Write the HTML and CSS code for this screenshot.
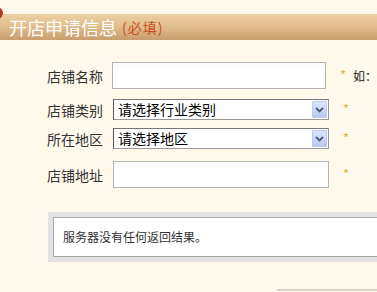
FILE: index.html
```html
<!DOCTYPE html>
<html lang="zh-CN">
<head>
<meta charset="utf-8">
<title>开店申请信息</title>
<link rel="stylesheet" href="styles.css">
</head>
<body>
<div class="page">
  <div class="header">
    <span class="dot"></span>
    <span class="title">开店申请信息</span>
    <span class="required">(必填)</span>
  </div>
  <div class="form">
    <div class="row row-text first">
      <span class="label">店铺名称</span>
      <span class="input"></span>
      <span class="star">*</span>
      <span class="hint">如：</span>
    </div>
    <div class="row row-select gap10">
      <span class="label">店铺类别</span>
      <span class="select"><span class="sel-text">请选择行业类别</span><span class="arrow"><svg width="9" height="6" viewBox="0 0 9 6"><path d="M1 1 L4.5 4.5 L8 1" fill="none" stroke="#4a5c80" stroke-width="1.8"/></svg></span></span>
      <span class="star">*</span>
    </div>
    <div class="row row-select gap8">
      <span class="label">所在地区</span>
      <span class="select"><span class="sel-text">请选择地区</span><span class="arrow"><svg width="9" height="6" viewBox="0 0 9 6"><path d="M1 1 L4.5 4.5 L8 1" fill="none" stroke="#4a5c80" stroke-width="1.8"/></svg></span></span>
      <span class="star">*</span>
    </div>
    <div class="row row-text gap12">
      <span class="label">店铺地址</span>
      <span class="input"></span>
      <span class="star">*</span>
    </div>
  </div>
  <div class="message">
    <div class="message-inner">服务器没有任何返回结果。</div>
  </div>
  <div class="bottom-line"></div>
</div>
</body>
</html>
```
FILE: styles.css
```css
html, body {
  margin: 0;
  padding: 0;
}
body {
  background: #fef9eb;
  font-family: "Noto Sans CJK SC", "Noto Sans", sans-serif;
  overflow: hidden;
  width: 377px;
  height: 292px;
}
.page {
  position: relative;
  padding-top: 14px;
}
.header {
  position: relative;
  height: 26px;
  display: flex;
  align-items: center;
  padding-left: 9px;
  background: linear-gradient(to bottom, #ebcfa2 0%, #e3bf8e 45%, #c99d6d 100%);
}
.dot {
  position: absolute;
  left: -9px;
  top: -7px;
  width: 12px;
  height: 12px;
  border-radius: 50%;
  background: #b03a26;
}
.title {
  color: #fff;
  font-size: 18px;
  line-height: 26px;
  letter-spacing: 0;
}
.required {
  color: #c8501e;
  font-size: 14px;
  line-height: 26px;
  margin-left: 5px;
  letter-spacing: 1px;
}
.form {
  display: flex;
  flex-direction: column;
  padding-left: 47px;
}
.row {
  display: flex;
  align-items: center;
  white-space: nowrap;
}
.first { margin-top: 22px; }
.gap10 { margin-top: 10px; }
.gap8 { margin-top: 8px; }
.gap12 { margin-top: 12px; }
.row-text { height: 27px; }
.row-select { height: 21px; }
.label {
  width: 66px;
  font-size: 14px;
  color: #333;
  line-height: 20px;
}
.input {
  box-sizing: border-box;
  width: 216px;
  height: 27px;
  border: 1px solid #b4b4b4;
  background: linear-gradient(to bottom, #fafafa, #fff 30%);
}
.select {
  box-sizing: border-box;
  width: 216px;
  height: 21px;
  border: 1px solid #9a9a9a;
  border-left-color: #555;
  border-top-color: #777;
  background: #fff;
  display: flex;
  align-items: center;
  justify-content: space-between;
  padding-left: 4px;
  padding-right: 1px;
}
.sel-text {
  font-size: 14px;
  color: #000;
  line-height: 19px;
}
.arrow {
  box-sizing: border-box;
  width: 15px;
  height: 17px;
  border: 1px solid #bccbeb;
  border-radius: 1px;
  background: linear-gradient(to bottom, #dbe5fb, #b7c9f0);
  display: flex;
  align-items: center;
  justify-content: center;
}
.star {
  color: #e3b33a;
  font-size: 13px;
  margin-left: 14px;
  line-height: 20px;
  margin-top: -2px;
}
.hint {
  font-size: 12px;
  color: #222;
  margin-left: 7px;
}
.message {
  margin-top: 24px;
  margin-left: 48px;
  width: 340px;
  box-sizing: border-box;
  padding: 5px;
  background: #e2e2e2;
}
.message-inner {
  box-sizing: border-box;
  height: 40px;
  border: 1px solid #a8a8a8;
  background: #fff;
  padding-left: 9px;
  font-size: 12px;
  color: #333;
  line-height: 38px;
  white-space: nowrap;
}
.bottom-line {
  margin-top: 27px;
  margin-left: 277px;
  height: 2px;
  background: #d9d2c2;
}
```
